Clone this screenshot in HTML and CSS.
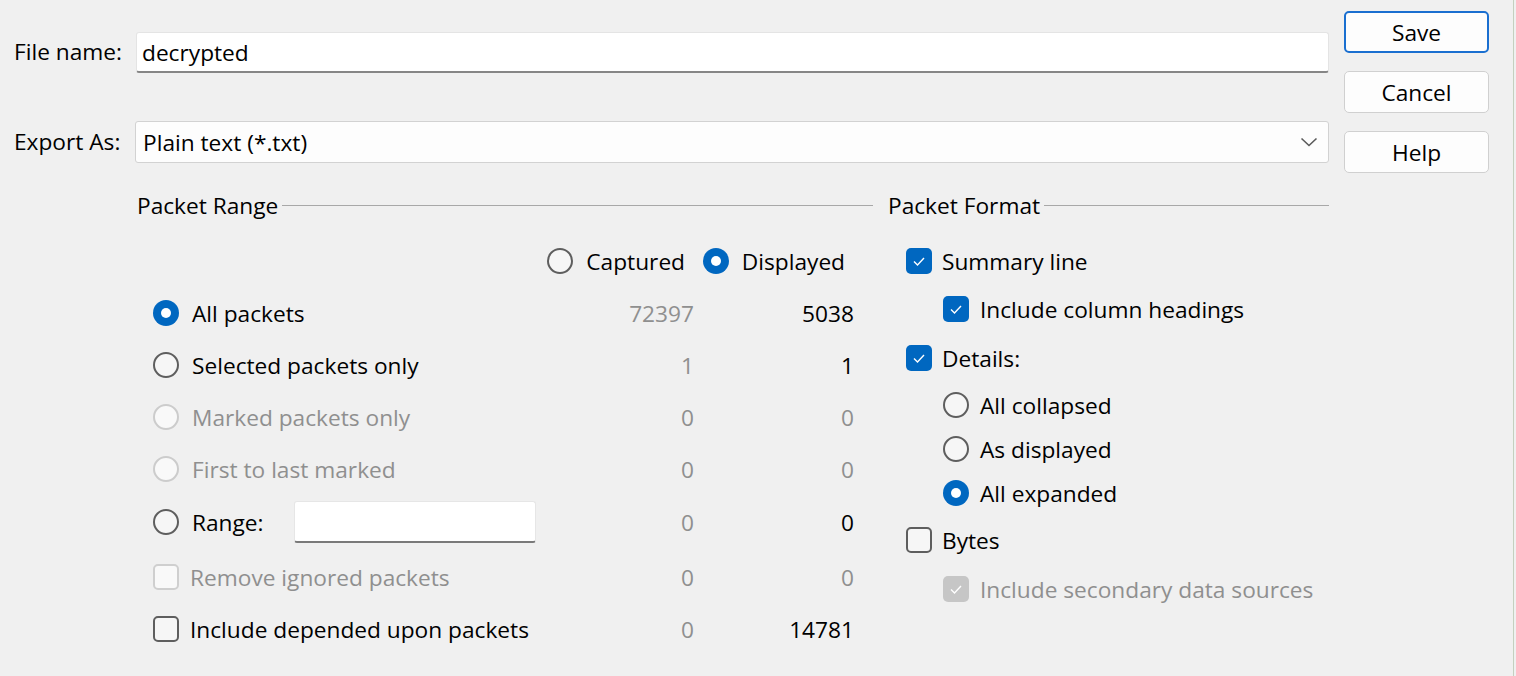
FILE: index.html
```html
<!DOCTYPE html>
<html lang="en">
<head>
<meta charset="utf-8">
<title>Export Packet Dissections</title>
<link rel="stylesheet" href="styles.css">
</head>
<body>
<div class="dialog">
  <div class="main">
    <div class="field-row row-file">
      <span class="field-label">File name:</span>
      <div class="textbox">decrypted</div>
    </div>
    <div class="field-row row-export">
      <span class="field-label">Export As:</span>
      <div class="combo">
        <span>Plain text (*.txt)</span>
        <svg class="chev" width="18" height="10" viewBox="0 0 18 10"><path d="M1.5 1.5 L9 8.5 L16.5 1.5" fill="none" stroke="#5a5a5a" stroke-width="1.6"/></svg>
      </div>
    </div>
    <div class="groups">
      <section class="group group-range">
        <div class="group-title"><span>Packet Range</span><i class="rule"></i></div>
        <div class="range-grid">
          <div class="hdr-spacer"></div>
          <div class="hdr"><span class="radio"></span><span>Captured</span></div>
          <div class="hdr"><span class="radio on"></span><span>Displayed</span></div>

          <div class="opt"><span class="radio on"></span><span>All packets</span></div>
          <div class="num dim">72397</div>
          <div class="num">5038</div>

          <div class="opt"><span class="radio"></span><span>Selected packets only</span></div>
          <div class="num dim">1</div>
          <div class="num">1</div>

          <div class="opt dim"><span class="radio off"></span><span>Marked packets only</span></div>
          <div class="num dim">0</div>
          <div class="num dim">0</div>

          <div class="opt dim"><span class="radio off"></span><span>First to last marked</span></div>
          <div class="num dim">0</div>
          <div class="num dim">0</div>

          <div class="opt"><span class="radio"></span><span class="rng-label">Range:</span><div class="rng-input"></div></div>
          <div class="num dim">0</div>
          <div class="num">0</div>

          <div class="opt dim"><span class="check off"></span><span>Remove ignored packets</span></div>
          <div class="num dim">0</div>
          <div class="num dim">0</div>

          <div class="opt"><span class="check"></span><span>Include depended upon packets</span></div>
          <div class="num dim">0</div>
          <div class="num">14781</div>
        </div>
      </section>
      <section class="group group-format">
        <div class="group-title"><span>Packet Format</span><i class="rule"></i></div>
        <div class="format-list">
          <div class="fopt frow-a"><span class="check on"><svg viewBox="0 0 26 26"><path d="M8 13.5 L11.5 17 L18 10" fill="none" stroke="#fff" stroke-width="1.4"/></svg></span><span>Summary line</span></div>
          <div class="fopt frow-a sub"><span class="check on"><svg viewBox="0 0 26 26"><path d="M8 13.5 L11.5 17 L18 10" fill="none" stroke="#fff" stroke-width="1.4"/></svg></span><span>Include column headings</span></div>
          <div class="fopt frow-b"><span class="check on"><svg viewBox="0 0 26 26"><path d="M8 13.5 L11.5 17 L18 10" fill="none" stroke="#fff" stroke-width="1.4"/></svg></span><span>Details:</span></div>
          <div class="fopt frow-r sub"><span class="radio"></span><span>All collapsed</span></div>
          <div class="fopt frow-r sub"><span class="radio"></span><span>As displayed</span></div>
          <div class="fopt frow-r sub"><span class="radio on"></span><span>All expanded</span></div>
          <div class="fopt frow-b"><span class="check"></span><span>Bytes</span></div>
          <div class="fopt frow-a sub dim"><span class="check dis-on"><svg viewBox="0 0 26 26"><path d="M8 13.5 L11.5 17 L18 10" fill="none" stroke="#fff" stroke-width="1.4"/></svg></span><span>Include secondary data sources</span></div>
        </div>
      </section>
    </div>
  </div>
  <div class="buttons">
    <div class="btn default">Save</div>
    <div class="btn">Cancel</div>
    <div class="btn">Help</div>
  </div>
  <div class="edge"></div>
</div>
</body>
</html>
```

FILE: styles.css
```css
* { box-sizing: border-box; }
html, body {
  margin: 0;
  padding: 0;
  background: #f0f0f0;
}
body {
  font-family: "Open Sans", "Noto Sans", sans-serif;
  font-size: 22.7px;
  color: #000;
  width: 1516px;
  height: 676px;
  overflow: hidden;
}
.dialog {
  display: flex;
  height: 676px;
  padding-left: 14px;
}
.main {
  width: 1315px;
  padding-top: 32px;
}
.field-row {
  display: grid;
  grid-template-columns: 121px 1fr;
  align-items: center;
}
.row-export { margin-top: 48px; }
.field-label { line-height: 1; }
.textbox {
  height: 41px;
  margin-left: 1px;
  background: #fff;
  border: 1px solid #e4e4e4;
  border-bottom: 2px solid #868686;
  border-radius: 3px;
  padding-left: 5px;
  display: flex;
  align-items: center;
}
.combo {
  height: 42px;
  background: #fdfdfd;
  border: 1px solid #d2d2d2;
  border-radius: 3px;
  padding: 0 10px 0 7px;
  display: flex;
  align-items: center;
  justify-content: space-between;
}
.chev { display: block; }

.groups {
  margin-top: 27px;
  margin-left: 123px;
  display: grid;
  grid-template-columns: 736px 441px;
  column-gap: 15px;
}
.group-title {
  height: 30px;
  display: flex;
  align-items: center;
  gap: 4px;
}
.rule {
  flex: 1;
  height: 1px;
  background: #a8a8a8;
  display: block;
}
.range-grid {
  margin-top: 15px;
  padding-left: 16px;
  padding-right: 19px;
  display: grid;
  grid-template-columns: 1fr 155px 160px;
  grid-template-rows: 52px 52px 52px 52px 52px 54px 56px 48px;
  align-items: center;
}
.hdr {
  display: flex;
  align-items: center;
  justify-content: flex-end;
  gap: 13px;
  padding-right: 9px;
}
.opt, .fopt {
  display: flex;
  align-items: center;
  gap: 13px;
  height: 100%;
}
.num {
  text-align: right;
  display: flex;
  align-items: center;
  justify-content: flex-end;
  height: 100%;
}
.dim { color: #8f8f8f; }
.opt .check { margin-right: -2px; }
.rng-label { width: 89px; }
.rng-input {
  width: 242px;
  height: 42px;
  background: #fff;
  border: 1px solid #e6e6e6;
  border-bottom: 2px solid #7a7a7a;
  border-radius: 3px;
}

.radio {
  width: 26px;
  height: 26px;
  flex: none;
  border-radius: 50%;
  border: 2px solid #5e5e5e;
  background: #f6f6f6;
  position: relative;
}
.radio.on {
  border: none;
  background: #0067c0;
}
.radio.on::after {
  content: "";
  position: absolute;
  left: 8px;
  top: 8px;
  width: 10px;
  height: 10px;
  border-radius: 50%;
  background: #fff;
}
.radio.off {
  border-color: #cccccc;
  background: #f9f9f9;
}
.check {
  width: 26px;
  height: 26px;
  flex: none;
  border-radius: 5px;
  border: 2px solid #5e5e5e;
  background: #f6f6f6;
}
.check svg { display: block; width: 26px; height: 26px; }
.check.on {
  border: none;
  background: #0067c0;
}
.check.off {
  border-color: #cfcfcf;
  background: #f9f9f9;
}
.check.dis-on {
  border: none;
  background: #c6c6c6;
}

.format-list {
  margin-top: 17px;
  padding-left: 18px;
  display: flex;
  flex-direction: column;
}
.frow-a { height: 48px; }
.frow-b { height: 50px; }
.frow-r { height: 44px; }
.fopt { gap: 10px; }
.fopt.sub { padding-left: 37px; gap: 11px; }

.buttons {
  width: 145px;
  margin-left: 15px;
  padding-top: 11px;
  display: flex;
  flex-direction: column;
  gap: 18px;
}
.btn {
  height: 42px;
  border: 1px solid #d0d0d0;
  border-radius: 5px;
  background: #fdfdfd;
  display: flex;
  align-items: center;
  justify-content: center;
}
.btn.default {
  border: 2px solid #1a6fd0;
}
.edge {
  width: 1px;
  margin-left: 24px;
  background: #c4d0bf;
}
```
